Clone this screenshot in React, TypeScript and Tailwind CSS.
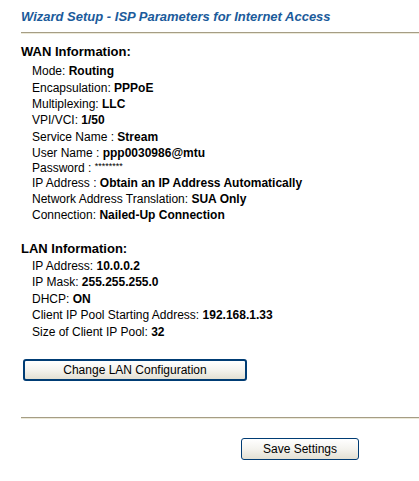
import React from "react";

const font = { fontFamily: '"Liberation Sans", Arial, sans-serif' };

function Row({ label, value, h = "h-[16.4px]", plain = false }: { label: string; value: string; h?: string; plain?: boolean }) {
  return (
    <div className={`${h} flex items-center whitespace-pre text-[12px] text-black`}>
      <span>
        {label}
        <span className={plain ? "font-normal text-[9px] align-top relative top-[1px]" : "font-bold"}>{value}</span>
      </span>
    </div>
  );
}

function XPButton({ children, className }: { children: React.ReactNode; className: string }) {
  return (
    <button
      className={`${className} rounded-[3px] border border-[#003c74] bg-gradient-to-b from-[#ffffff] via-[#f4f3ee] to-[#e3e0d3] text-[12px] text-black flex items-center justify-center`}
      style={font}
    >
      {children}
    </button>
  );
}

export default function App() {
  return (
    <div className="w-[419px] h-[481px] bg-white overflow-hidden" style={font}>
      <div className="pl-[21px] pt-[8px]">
        <div className="h-[18px] flex items-center text-[13px] font-bold italic text-[#1b5b9b]">
          Wizard Setup - ISP Parameters for Internet Access
        </div>
        <div className="mt-[6px] h-[2px] border-t border-[#a59d85] bg-[#ece9d8]" />
        <div className="mt-[10px] h-[16px] flex items-center text-[13px] font-bold text-black">WAN Information:</div>
        <div className="pl-[11px] mt-[3px]">
          <Row label="Mode: " value="Routing" />
          <Row label="Encapsulation: " value="PPPoE" />
          <Row label="Multiplexing: " value="LLC" />
          <Row label="VPI/VCI: " value="1/50" />
          <Row label="Service Name : " value="Stream" />
          <Row label="User Name : " value="ppp0030986@mtu" h="h-[15.5px]" />
          <Row label="Password : " value="********" h="h-[15px]" plain />
          <Row label="IP Address : " value="Obtain an IP Address Automatically" h="h-[16px]" />
          <Row label="Network Address Translation: " value="SUA Only" h="h-[15.5px]" />
          <Row label="Connection: " value="Nailed-Up Connection" h="h-[15.5px]" />
        </div>
        <div className="mt-[18px] h-[16px] flex items-center text-[13px] font-bold text-black">LAN Information:</div>
        <div className="pl-[11px] mt-[1px]">
          <Row label="IP Address: " value="10.0.0.2" h="h-[16.5px]" />
          <Row label="IP Mask: " value="255.255.255.0" h="h-[16.5px]" />
          <Row label="DHCP: " value="ON" h="h-[16.5px]" />
          <Row label="Client IP Pool Starting Address: " value="192.168.1.33" h="h-[16.5px]" />
          <Row label="Size of Client IP Pool: " value="32" h="h-[16.5px]" />
        </div>
        <div className="mt-[19px] pl-[2px]">
          <XPButton className="w-[224px] h-[22px] border-2 border-[#1d4f87]">Change LAN Configuration</XPButton>
        </div>
        <div className="mt-[36px] h-[2px] border-t border-[#a59d85] bg-[#ece9d8]" />
        <div className="mt-[19px] pl-[220px]">
          <XPButton className="w-[118px] h-[22px]">Save Settings</XPButton>
        </div>
      </div>
    </div>
  );
}
